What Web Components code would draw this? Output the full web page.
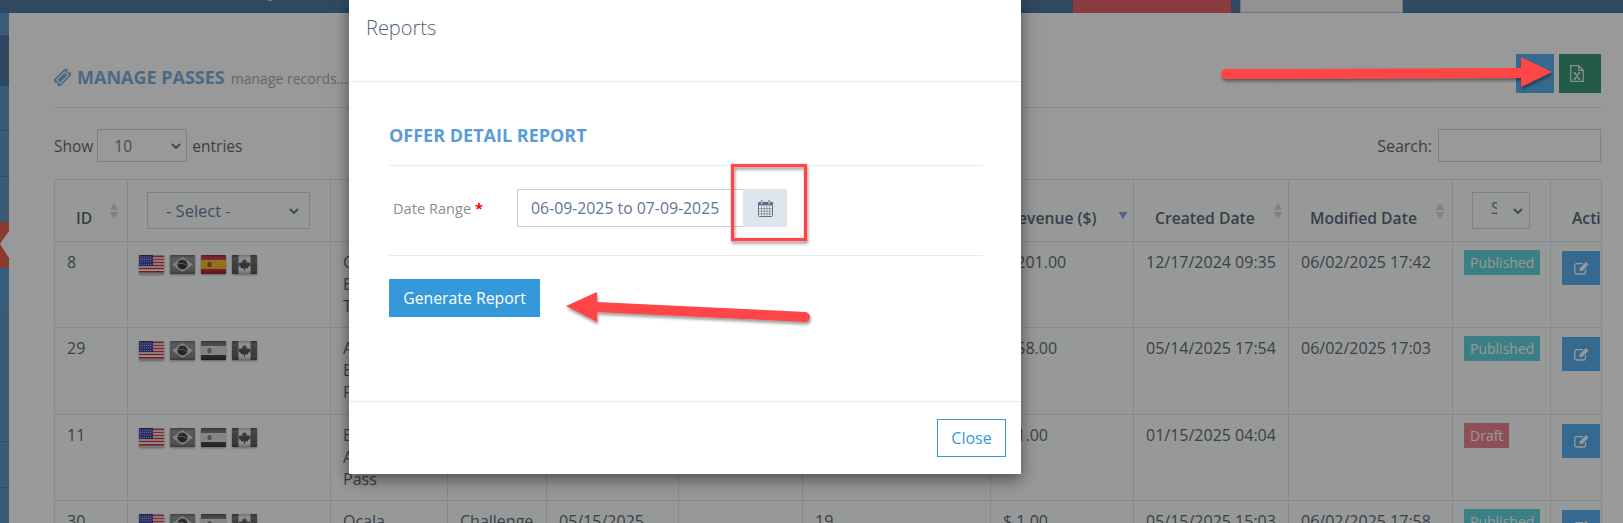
<!DOCTYPE html>
<html>
<head>
<meta charset="utf-8">
<style>
  html, body { margin: 0; height: 523px; overflow: hidden; background: #fff; }
  body { position: relative; font-family: "Open Sans", "Noto Sans", sans-serif; }
</style>
</head>
<body>
<admin-page></admin-page>
<modal-backdrop></modal-backdrop>
<report-modal></report-modal>
<callout-marks></callout-marks>

<script>
const TEXT = "#626c78";
const FONT = `"Open Sans", "Noto Sans", sans-serif`;

const ICONS = {
    calendar: `<svg viewBox="0 0 15 17" width="15" height="17"><rect x=".5" y="2.5" width="14" height="14" rx="1" fill="#eef0f4" stroke="#5b6f88"/><rect x="0" y="2" width="15" height="3.4" rx="1" fill="#5b6f88"/><path d="M3.5 6v10M6.2 6v10M8.9 6v10M11.6 6v10M1 8.6h13M1 11.2h13M1 13.8h13" stroke="#5b6f88" stroke-width=".6" fill="none"/><rect x="2.8" y=".4" width="2" height="4" rx="1" fill="#c5d3e2" stroke="#5b6f88" stroke-width=".6"/><rect x="10.2" y=".4" width="2" height="4" rx="1" fill="#c5d3e2" stroke="#5b6f88" stroke-width=".6"/></svg>`,
    excel: `<svg viewBox="0 0 14 17" width="14" height="17" fill="none" stroke="#e2ebe7" stroke-width="1.3"><path d="M.7.7h8l4.6 4.6v11H.7z"/><path d="M8.7.7v4.6h4.6"/><path d="M3.6 8h2.4M8 8h2.4M3.6 14h2.4M8 14h2.4M4.8 8l4.4 6M9.2 8l-4.4 6" stroke-width="1.5"/></svg>`,
    edit: `<svg viewBox="0 0 16 14" width="16" height="14" fill="none" stroke="#fff"><path d="M11.5 8.2v3a1.8 1.8 0 0 1-1.8 1.8H2.6A1.8 1.8 0 0 1 .8 11.2V4.4a1.8 1.8 0 0 1 1.8-1.8h6.4" stroke-width="1.3"/><path d="M5.6 7.4 12 1l2.6 2.6-6.4 6.4H5.6z" fill="#fff" stroke="none"/></svg>`,
    ticket: `<svg viewBox="0 0 16 16" width="17" height="17"><g transform="rotate(-45 8 8)"><path d="M-1 3.6h18v2.6a1.8 1.8 0 0 0 0 3.6v2.6H-1V9.8a1.8 1.8 0 0 0 0-3.6z" fill="#7fb0dd"/><rect x="2.6" y="5.6" width="10.8" height="4.8" fill="none" stroke="#fff" stroke-width="1"/></g></svg>`
};

const FLAGS = {
    us: `<rect width="25" height="19" fill="#fff"/><path d="M0 1.5h25M0 4.5h25M0 7.5h25M0 10.5h25M0 13.5h25M0 16.8h25" stroke="#d8343f" stroke-width="1.6"/><rect width="14" height="11" fill="#3c3fa8"/><path d="M1 2h12M1 4.5h12M1 7h12M1 9.5h12" stroke="#a9abe0" stroke-width="1" stroke-dasharray="1 1"/>`,
    br: `<rect width="25" height="19" fill="#8c8c8c"/><path d="M12.5 2 23 9.5 12.5 17 2 9.5z" fill="#dedede"/><circle cx="12.5" cy="9.5" r="5" fill="#3c3c3c"/><path d="M8 8.5q5-1 9 2" stroke="#bbb" fill="none" stroke-width=".7"/>`,
    es: `<rect width="25" height="19" fill="#c7313a"/><rect y="5" width="25" height="9" fill="#f5c12e"/><rect x="6.5" y="7" width="4" height="5" rx="1.2" fill="#b5552c"/>`,
    esg: `<rect width="25" height="19" fill="#6e6e6e"/><rect y="5" width="25" height="9" fill="#e2e2e2"/><rect y="14" width="25" height="5" fill="#4a4a4a"/><rect x="6.5" y="7" width="4" height="5" rx="1.6" fill="#8a8a8a"/>`,
    ca: `<rect width="25" height="19" fill="#f1f1f1"/><rect width="6.5" height="19" fill="#666"/><rect x="18.5" width="6.5" height="19" fill="#666"/><path d="M12.5 3.4l1.3 2.4 1.2-.6-.5 3 1.7-1.3.4 1.1 1.8-.3-.6 1.9.8.5-2.9 2.3.3 1.2-2.9-.4v2.5h-1.2v-2.5l-2.9.4.3-1.2-2.9-2.3.8-.5-.6-1.9 1.8.3.4-1.1 1.7 1.3-.5-3 1.2.6z" fill="#555"/>`
};

class FlagIcon extends HTMLElement {
    constructor() {
        super();
        const code = this.getAttribute("code");
        const id = "g" + Math.random().toString(36).slice(2);
        this.attachShadow({ mode: "open" }).innerHTML = `<style>
            :host { display: block; width: 25px; height: 19px; filter: drop-shadow(0 1px 1px rgba(0,0,0,.35)); }
            svg { display: block; border-radius: 1px; }
        </style>
        <svg viewBox="0 0 25 19" width="25" height="19">
            <defs><linearGradient id="${id}" x1="0" y1="0" x2="0" y2="1">
                <stop offset="0" stop-color="#000" stop-opacity=".22"/>
                <stop offset=".2" stop-color="#fff" stop-opacity=".12"/>
                <stop offset=".8" stop-color="#000" stop-opacity="0"/>
                <stop offset="1" stop-color="#000" stop-opacity=".28"/>
            </linearGradient></defs>
            ${FLAGS[code]}
            <rect width="25" height="19" fill="url(#${id})"/>
        </svg>`;
    }
}
customElements.define("flag-icon", FlagIcon);

class TopBar extends HTMLElement {
    constructor() {
        super();
        this.attachShadow({ mode: "open" }).innerHTML = `<style>
            :host { display: flex; height: 13px; background: #4f7aa0; }
            .speck { width: 4px; height: 1px; background: #c9d4de; margin-left: 268px; }
            .red { width: 158px; background: #e8616b; margin-left: 801px; }
            .tab { width: 161px; margin-left: 9px; background: #f4f4f4; border: 1px solid #bfc6cf; border-width: 0 1px 1px; box-sizing: content-box; height: 12px; }
        </style>
        <div class="speck"></div><div class="red"></div><div class="tab"></div>`;
    }
}
customElements.define("top-bar", TopBar);

class SideRail extends HTMLElement {
    constructor() {
        super();
        this.attachShadow({ mode: "open" }).innerHTML = `<style>
            :host { display: flex; flex-direction: column; width: 9px; flex: none; background: #6296c4; }
            div { flex: none; }
            .a { height: 22px; background: #6698c6; }
            .b { height: 51px; background: #4f779f; }
            .c { height: 45px; border-bottom: 1px solid #5682ac; box-sizing: border-box; }
            .d { height: 46px; border-bottom: 1px solid #5682ac; box-sizing: border-box; }
            .e { height: 45px; }
            .f { height: 42px; background: #5a9ccf; }
            .g { height: 132px; border-bottom: 1px solid #5682ac; box-sizing: border-box; }
            .h { height: 46px; border-bottom: 1px solid #5682ac; box-sizing: border-box; }
            svg { display: block; flex: none; }
        </style>
        <div class="a"></div><div class="b"></div><div class="c"></div><div class="d"></div><div class="e"></div>
        <svg viewBox="0 0 9 46" width="9" height="46"><rect width="9" height="46" fill="#e8614f"/><path d="M9 9 0 22 9 36z" fill="#fff"/></svg>
        <div class="f"></div><div class="g"></div><div class="h"></div>`;
    }
}
customElements.define("side-rail", SideRail);

class PageHeading extends HTMLElement {
    constructor() {
        super();
        this.attachShadow({ mode: "open" }).innerHTML = `<style>
            :host { display: flex; align-items: flex-start; justify-content: space-between; height: 53px; padding-top: 0; border-bottom: 1px solid #dfe3e8; }
            .title { display: flex; align-items: baseline; margin-top: 11px; }
            svg { align-self: center; margin-right: 6px; }
            b { font-size: 18px; font-weight: 700; color: #7fb0dd; }
            small { font-size: 14px; color: #a3adb7; margin-left: 6px; white-space: nowrap; }
            .btns { display: flex; gap: 5px; }
            .btns span { display: flex; align-items: center; justify-content: center; height: 39px; }
            .blue { width: 38px; background: #5bb0ee; }
            .green { width: 42px; background: #3a9a7b; }
        </style>
        <div class="title">
            ${ICONS.ticket}
            <b>MANAGE PASSES</b><small>manage records...</small>
        </div>
        <div class="btns"><span class="blue"></span><span class="green">${ICONS.excel}</span></div>`;
    }
}
customElements.define("page-heading", PageHeading);

class FieldSelect extends HTMLElement {
    constructor() {
        super();
        this.attachShadow({ mode: "open" }).innerHTML = `<style>
            :host { display: flex; align-items: center; box-sizing: border-box; border: 1px solid #d2d8e0; color: #6a7f9c; font-size: 15.5px; overflow: hidden; position: relative; background: inherit; }
            .lab { white-space: nowrap; flex: 1; overflow: hidden; }
            svg { flex: none; }
        </style>
        <span class="lab"><slot></slot></span>
        <svg viewBox="0 0 10 6" width="10" height="6" fill="none" stroke="#5e7590" stroke-width="1.8"><path d="M1 1l4 4 4-4"/></svg>`;
    }
}
customElements.define("field-select", FieldSelect);

class TableTools extends HTMLElement {
    constructor() {
        super();
        this.attachShadow({ mode: "open" }).innerHTML = `<style>
            :host { display: flex; justify-content: space-between; align-items: center; height: 33px; margin-top: 21px; font-size: 16px; color: ${TEXT}; }
            .side { display: flex; align-items: center; gap: 5px; }
            .show { font-size: 15.5px; }
            field-select { width: 90px; height: 33px; padding: 0 5px 0 16px; margin-left: -1px; }
            .search { width: 163px; height: 33px; box-sizing: border-box; border: 1px solid #d2d8e0; margin-left: 1px; }
        </style>
        <div class="side show">Show <field-select>10</field-select> entries</div>
        <div class="side">Search: <div class="search"></div></div>`;
    }
}
customElements.define("table-tools", TableTools);

class PassTable extends HTMLElement {
    constructor() {
        super();
        const widths = [73, 203, 117, 99, 132, 124, 188, 143, 155, 164, 98, 51];
        const sort = (left) => `<svg class="sort" style="left:${left}px" viewBox="0 0 10 18" width="10" height="18">
            <path d="M5 1l4.5 7H.5z" fill="#d6d9dd"/><path d="M5 17l4.5-7H.5z" fill="#d6d9dd"/></svg>`;
        const sorted = (left) => `<svg class="sort" style="left:${left}px" viewBox="0 0 10 18" width="10" height="18">
            <path d="M5 17l4.5-7H.5z" fill="#9999ff"/></svg>`;
        const flags = (third) => ["us", "br", third, "ca"].map(c => `<flag-icon code="${c}"></flag-icon>`).join("");
        const rows = [
            { h: 86, id: "8", third: "es", name: "O<br>E<br>T", rev: "$ 201.00", made: "12/17/2024 09:35", mod: "06/02/2025 17:42", st: "Published" },
            { h: 87, id: "29", third: "esg", name: "A<br>E<br>F", rev: "$ 58.00", made: "05/14/2025 17:54", mod: "06/02/2025 17:03", st: "Published" },
            { h: 86, id: "11", third: "esg", name: "E<br>A<br>Pass", rev: "$ 1.00", made: "01/15/2025 04:04", mod: "", st: "Draft" },
            { h: 86, id: "30", third: "esg", name: "Ocala", type: "Challenge", start: "05/15/2025", qty: "19", rev: "$ 1.00", made: "05/15/2025 15:03", mod: "06/02/2025 17:58", st: "Published" }
        ];
        const body = rows.map(r => `<tr style="height:${r.h}px">
            <td>${r.id}</td>
            <td class="flags"><div>${flags(r.third)}</div></td>
            <td>${r.name}</td>
            <td>${r.type || ""}</td>
            <td>${r.start || ""}</td>
            <td></td>
            <td>${r.qty || ""}</td>
            <td>${r.rev}</td>
            <td>${r.made}</td>
            <td>${r.mod}</td>
            <td class="stat"><span class="badge ${r.st === "Draft" ? "draft" : ""}">${r.st}</span></td>
            <td class="act"><span class="edit">${ICONS.edit}</span></td>
        </tr>`).join("");
        this.attachShadow({ mode: "open" }).innerHTML = `<style>
            :host { display: block; margin-top: 17px; width: 1548px; }
            table { border-collapse: collapse; table-layout: fixed; width: 1548px; color: ${TEXT}; font-size: 16px; line-height: 22px; background: #fcfffe; }
            th, td { border: 1px solid #dfe5ec; padding: 0; vertical-align: top; overflow: hidden; }
            td { padding: 9px 8px 0 12px; white-space: nowrap; }
            thead tr { height: 62px; }
            th { font-weight: 600; font-size: 15.7px; position: relative; white-space: nowrap; text-align: left; vertical-align: middle; padding: 14px 0 0 0; color: #5c6a7a; }
            th.sel { padding: 0; vertical-align: top; }
            .sort { position: absolute; top: 22px; }
            th field-select { height: 37px; margin-top: 12px; background: transparent; font-weight: 500; font-size: 16.5px; }
            .flags div { display: flex; gap: 6px; margin-top: 4px; }
            td.flags { padding-left: 11px; }
            .badge { display: inline-block; height: 25px; line-height: 25px; padding: 0 6px; background: #62d4dc; color: #fff; font-size: 14px; vertical-align: top; }
            .draft { background: #ee848f; }
            td.stat { padding: 8px 0 0 11px; }
            td.act { padding: 9px 0 0 11px; }
            .edit { display: flex; align-items: center; justify-content: center; width: 36px; padding-left: 2px; height: 34px; background: #5bb0ee; }
        </style>
        <table>
            <colgroup>${widths.map(w => `<col style="width:${w}px">`).join("")}</colgroup>
            <thead><tr>
                <th style="padding-left:21px">ID${sort(54)}</th>
                <th class="sel"><field-select style="width:163px;margin-left:19px;padding:0 10px 0 18px">- Select -</field-select></th>
                <th></th><th></th><th></th><th></th><th></th>
                <th style="padding-left:17px">Revenue ($)${sorted(127)}</th>
                <th style="padding-left:21px">Created Date${sort(139)}</th>
                <th style="padding-left:21px">Modified Date${sort(146)}</th>
                <th class="sel"><field-select style="width:58px;margin-left:19px;padding:0 6px 0 18px"><span style="display:inline-block;width:6px;overflow:hidden;font-size:16px">Status</span></field-select></th>
                <th style="padding-left:21px">Action</th>
            </tr></thead>
            <tbody>${body}</tbody>
        </table>`;
    }
}
customElements.define("pass-table", PassTable);

class AdminPage extends HTMLElement {
    constructor() {
        super();
        this.attachShadow({ mode: "open" }).innerHTML = `<style>
            :host { display: block; height: 523px; overflow: hidden; }
            .main { display: flex; height: 510px; }
            .content { flex: 1; padding: 41px 22px 0 45px; min-width: 0; background: #fff; }
        </style>
        <top-bar></top-bar>
        <div class="main">
            <side-rail></side-rail>
            <div class="content">
                <page-heading></page-heading>
                <table-tools></table-tools>
                <pass-table></pass-table>
            </div>
        </div>`;
    }
}
customElements.define("admin-page", AdminPage);

class ModalBackdrop extends HTMLElement {
    constructor() {
        super();
        this.attachShadow({ mode: "open" }).innerHTML = `<style>
            :host { position: absolute; inset: 0; background: rgba(0,0,0,.4); }
        </style>`;
    }
}
customElements.define("modal-backdrop", ModalBackdrop);

class ReportModal extends HTMLElement {
    constructor() {
        super();
        this.attachShadow({ mode: "open" }).innerHTML = `<style>
            :host { position: absolute; left: 349px; top: 0; width: 672px; height: 474px; background: #fff; display: flex; flex-direction: column; box-shadow: 0 5px 15px rgba(0,0,0,.5); font-family: ${FONT}; }
            header { height: 82px; box-sizing: border-box; padding: 14px 17px 0; border-bottom: 1px solid #e8eaec; font-size: 20px; font-weight: 300; line-height: 28px; color: #4f6478; }
            .body { flex: 1; padding: 42px 38px 0 40px; }
            h4 { margin: 0; height: 42px; font-size: 18px; line-height: 22px; font-weight: 700; color: #5b9bd8; border-bottom: 1px solid #e8eaec; box-sizing: border-box; }
            .row { display: flex; align-items: flex-start; height: 90px; border-bottom: 1px solid #e8eaec; box-sizing: border-box; padding-top: 23px; }
            label { width: 128px; padding-left: 4px; box-sizing: border-box; font-size: 14.6px; line-height: 38px; color: #8d8d8d; }
            label i { color: #f00; font-style: normal; font-weight: 700; }
            .input { width: 226px; height: 38px; box-sizing: border-box; border: 1px solid #c3cddb; border-right: 0; display: flex; align-items: center; padding-left: 13px; font-size: 15.8px; color: #5f7690; white-space: nowrap; }
            .addon { width: 44px; height: 38px; background: #dfe5ec; display: flex; align-items: center; justify-content: center; }
            .gen { display: flex; align-items: center; justify-content: center; width: 151px; height: 38px; margin-top: 23px; background: #3498db; color: #fff; font-size: 15.8px; }
            footer { height: 73px; box-sizing: border-box; border-top: 1px solid #e8eaec; display: flex; justify-content: flex-end; padding: 17px 15px 0 0; }
            .close { display: flex; align-items: center; justify-content: center; width: 69px; height: 38px; box-sizing: border-box; border: 1px solid #3498db; color: #3498db; font-size: 16px; }
        </style>
        <header>Reports</header>
        <div class="body">
            <h4>OFFER DETAIL REPORT</h4>
            <div class="row">
                <label>Date Range <i>*</i></label>
                <div class="input">06-09-2025 to 07-09-2025</div>
                <div class="addon">${ICONS.calendar}</div>
            </div>
            <div class="gen">Generate Report</div>
        </div>
        <footer><div class="close">Close</div></footer>`;
    }
}
customElements.define("report-modal", ReportModal);

// red annotations drawn over the screenshot
class CalloutMarks extends HTMLElement {
    constructor() {
        super();
        this.attachShadow({ mode: "open" }).innerHTML = `<style>
            :host { position: absolute; inset: 0; pointer-events: none; }
            svg { display: block; }
        </style>
        <svg width="1623" height="523" viewBox="0 0 1623 523">
            <defs><filter id="s" x="-10%" y="-30%" width="120%" height="180%"><feDropShadow dx="1" dy="2.5" stdDeviation="1.8" flood-color="#000" flood-opacity=".4"/></filter></defs>
            <g filter="url(#s)">
                <rect x="732.5" y="165.5" width="73" height="74" fill="none" stroke="#ff4444" stroke-width="3.2"/>
            </g>
            <g filter="url(#s)" fill="#ff4444">
                <path d="M1226 74 1522 73" stroke="#ff4444" stroke-width="10" stroke-linecap="round"/>
                <path d="M1521 57 1552 72 1521 87z"/>
            </g>
            <g filter="url(#s)" fill="#ff4444">
                <path d="M805 317 596 307" stroke="#ff4444" stroke-width="10" stroke-linecap="round"/>
                <path d="M597 292 566 306 597 322z"/>
            </g>
        </svg>`;
    }
}
customElements.define("callout-marks", CalloutMarks);
</script>
</body>
</html>
